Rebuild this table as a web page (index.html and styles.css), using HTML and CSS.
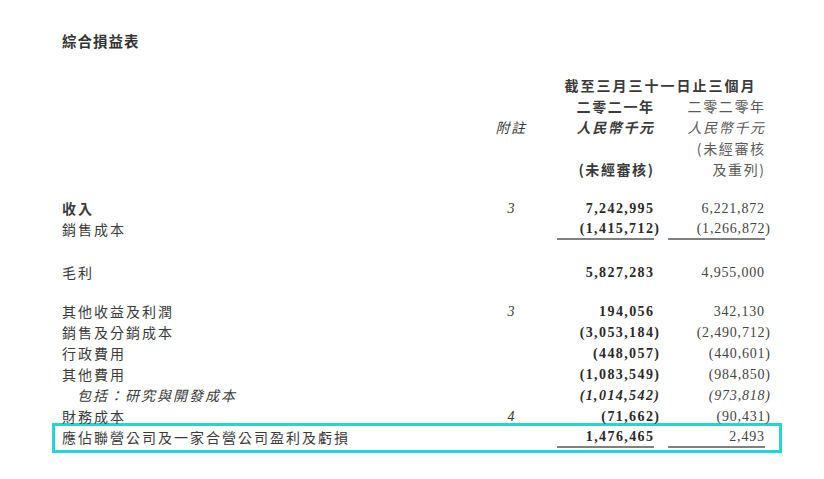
FILE: index.html
```html
<!DOCTYPE html>
<html lang="zh-Hant">
<head>
<meta charset="utf-8">
<title>綜合損益表</title>
<link rel="stylesheet" href="styles.css">
</head>
<body>
<div class="page">
  <div class="title">綜合損益表</div>

  <div class="head">
    <div class="row"><div class="span b">截至三月三十一日止三個月</div></div>
    <div class="row"><div class="c1 b">二零二一年</div><div class="c2 gray">二零二零年</div></div>
    <div class="row"><div class="note it">附註</div><div class="c1 b it">人民幣千元</div><div class="c2 it gray">人民幣千元</div></div>
    <div class="row"><div class="c2 gray">(未經審核</div></div>
    <div class="row"><div class="c1 b">(未經審核)</div><div class="c2 gray">及重列)</div></div>
  </div>

  <div class="group g1">
    <div class="row"><div class="label b">收入</div><div class="note num it">3</div><div class="c1 num b">7,242,995</div><div class="c2 num">6,221,872</div></div>
    <div class="row"><div class="label">銷售成本</div><div class="c1 num b ul">(1,415,712<span class="rp">)</span></div><div class="c2 num ul">(1,266,872<span class="rp">)</span></div></div>
  </div>

  <div class="group g2">
    <div class="row"><div class="label">毛利</div><div class="c1 num b">5,827,283</div><div class="c2 num">4,955,000</div></div>
  </div>

  <div class="group g3">
    <div class="row"><div class="label">其他收益及利潤</div><div class="note num it">3</div><div class="c1 num b">194,056</div><div class="c2 num">342,130</div></div>
    <div class="row"><div class="label">銷售及分銷成本</div><div class="c1 num b">(3,053,184<span class="rp">)</span></div><div class="c2 num">(2,490,712<span class="rp">)</span></div></div>
    <div class="row"><div class="label">行政費用</div><div class="c1 num b">(448,057<span class="rp">)</span></div><div class="c2 num">(440,601<span class="rp">)</span></div></div>
    <div class="row"><div class="label">其他費用</div><div class="c1 num b">(1,083,549<span class="rp">)</span></div><div class="c2 num">(984,850<span class="rp">)</span></div></div>
    <div class="row"><div class="label it indent">包括：研究與開發成本</div><div class="c1 num b it">(1,014,542<span class="rp">)</span></div><div class="c2 num it">(973,818<span class="rp">)</span></div></div>
    <div class="row"><div class="label">財務成本</div><div class="note num it">4</div><div class="c1 num b">(71,662<span class="rp">)</span></div><div class="c2 num">(90,431<span class="rp">)</span></div></div>
    <div class="hlbox">
      <div class="row"><div class="label">應佔聯營公司及一家合營公司盈利及虧損</div><div class="c1 num b ul">1,476,465</div><div class="c2 num ul">2,493</div></div>
    </div>
  </div>
</div>
</body>
</html>
```

FILE: styles.css
```css
html, body {
  margin: 0;
  padding: 0;
  background: #ffffff;
}

body {
  font-family: "Noto Sans CJK TC", "Noto Sans CJK SC", sans-serif;
  color: #3a3a3a;
  font-size: 14px;
}

.page {
  width: 702px;
  padding: 30px 0 0 62px;
}

.title {
  font-weight: 700;
  font-size: 14.5px;
  letter-spacing: 1px;
  line-height: 21px;
  color: #333;
}

.head {
  margin-top: 24px;
}

.row {
  display: grid;
  grid-template-columns: 1fr 32px 30px 96px 15px 96px;
  height: 21px;
  line-height: 21px;
  letter-spacing: 2px;
  white-space: nowrap;
}

.head .row {
  letter-spacing: 1.6px;
}

.label { grid-column: 1; }
.note { grid-column: 2; text-align: center; }
.c1 { grid-column: 4; text-align: right; margin-right: -1.6px; }
.c2 { grid-column: 6; text-align: right; margin-right: -1.6px; }
.span { grid-column: 4 / 7; text-align: center; letter-spacing: 2px; }

.b { font-weight: 700; }
.it { font-style: italic; }
.gray { color: #5a5a5a; }

.indent { padding-left: 15px; }

.num {
  font-family: "Liberation Serif", "Times New Roman", serif;
  font-size: 14px;
  letter-spacing: 0.8px;
}
.num.b { letter-spacing: 1.4px; color: #2a2a2a; }
.c1.num { margin-right: -1.4px; }
.c2.num { margin-right: -0.8px; color: #444; }
.note.num { letter-spacing: 0; }

.rp { margin-right: -6px; }

.ul {
  box-sizing: border-box;
  border-bottom: 2px solid #808080;
  line-height: 19px;
  margin-right: 0;
}

.group.g1 { margin-top: 18px; }
.group.g2 { margin-top: 22px; }
.group.g3 { margin-top: 18px; }

.hlbox {
  margin: -4.5px -18px 0 -10px;
  padding: 1.5px 15px 1.5px 7px;
  border: 3px solid #22d6d8;
}
```
